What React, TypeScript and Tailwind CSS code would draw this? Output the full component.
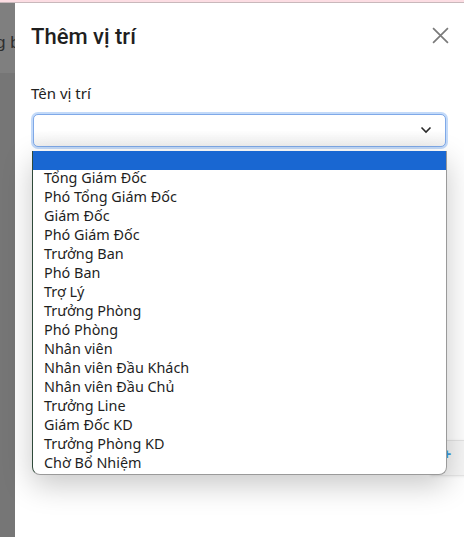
import React from "react";

const positions = [
  "Tổng Giám Đốc",
  "Phó Tổng Giám Đốc",
  "Giám Đốc",
  "Phó Giám Đốc",
  "Trưởng Ban",
  "Phó Ban",
  "Trợ Lý",
  "Trưởng Phòng",
  "Phó Phòng",
  "Nhân viên",
  "Nhân viên Đầu Khách",
  "Nhân viên Đầu Chủ",
  "Trưởng Line",
  "Giám Đốc KD",
  "Trưởng Phòng KD",
  "Chờ Bổ Nhiệm",
];

export default function App() {
  return (
    <div className="relative w-[464px] h-[537px] overflow-hidden bg-white font-['Liberation_Sans',sans-serif]">
      <div className="h-[3px] bg-[#fcdde3] border-b border-[#c9b8bb]" />
      <div className="flex h-[534px]">
        {/* page behind the overlay */}
        <div className="w-[15px] shrink-0 flex flex-col overflow-hidden">
          <div className="h-[70px] bg-[#7f7f7f] flex items-center overflow-hidden">
            <span className="ml-[-4px] mt-[10px] text-[17px] text-[#2e2e2e] whitespace-nowrap">g b</span>
          </div>
          <div className="flex-1 bg-[#767676]" />
        </div>

        {/* modal */}
        <div className="flex-1 bg-white">
          <div className="flex items-center justify-between pl-[16px] pr-[15px] pt-[6px] h-[60px]">
            <h2 className="text-[22px] font-medium text-[#1f1f1f] font-['Roboto',sans-serif]">Thêm vị trí</h2>
            <svg width="17" height="17" viewBox="0 0 16 16" className="mt-[-2px]">
              <path d="M1 1L15 15M15 1L1 15" stroke="#7a7a7a" strokeWidth="1.6" />
            </svg>
          </div>
          <div className="px-[16px] pt-[19px]">
            <label className="block text-[15px] text-[#222] font-['Noto_Sans',sans-serif]">Tên vị trí</label>
            <div className="mt-[7px] h-[37px] rounded-[7px] p-[2px] bg-[#c3daf9]">
              <div className="h-full rounded-[5px] border border-[#7fa9e8] bg-gradient-to-b from-white via-white to-[#f0f0f0] flex items-center justify-end pr-[13px]">
                <svg width="12" height="8" viewBox="0 0 12 8">
                  <path d="M1.5 1.5L6 6L10.5 1.5" stroke="#2a2a2a" strokeWidth="1.6" fill="none" />
                </svg>
              </div>
            </div>
          </div>
        </div>
      </div>

      {/* item behind the popup */}
      <div className="absolute left-[430px] top-[440px] w-[40px] h-[35px] bg-[#f6f6f6] border-t border-[#e4e4e4] shadow-sm">
        <span className="absolute left-[13px] top-[3px] text-[#3a9be0] text-[14px] font-bold">+</span>
      </div>

      {/* native select popup */}
      <div className="absolute left-[32px] top-[151px] w-[415px] bg-white border-l border-[#2f4a3a] border-r border-b border-r-[#9a9a9a] border-b-[#9a9a9a] rounded-b-[8px] shadow-[0_10px_30px_rgba(0,0,0,0.22)] overflow-hidden font-['Noto_Sans',sans-serif]">
        <div className="h-[19px] bg-[#1967d2]" />
        {positions.map((p) => (
          <div key={p} className="h-[19px] pl-[11px] text-[14.4px] leading-[16px] text-[#1f1f1f] whitespace-nowrap">
            {p}
          </div>
        ))}
      </div>
    </div>
  );
}
